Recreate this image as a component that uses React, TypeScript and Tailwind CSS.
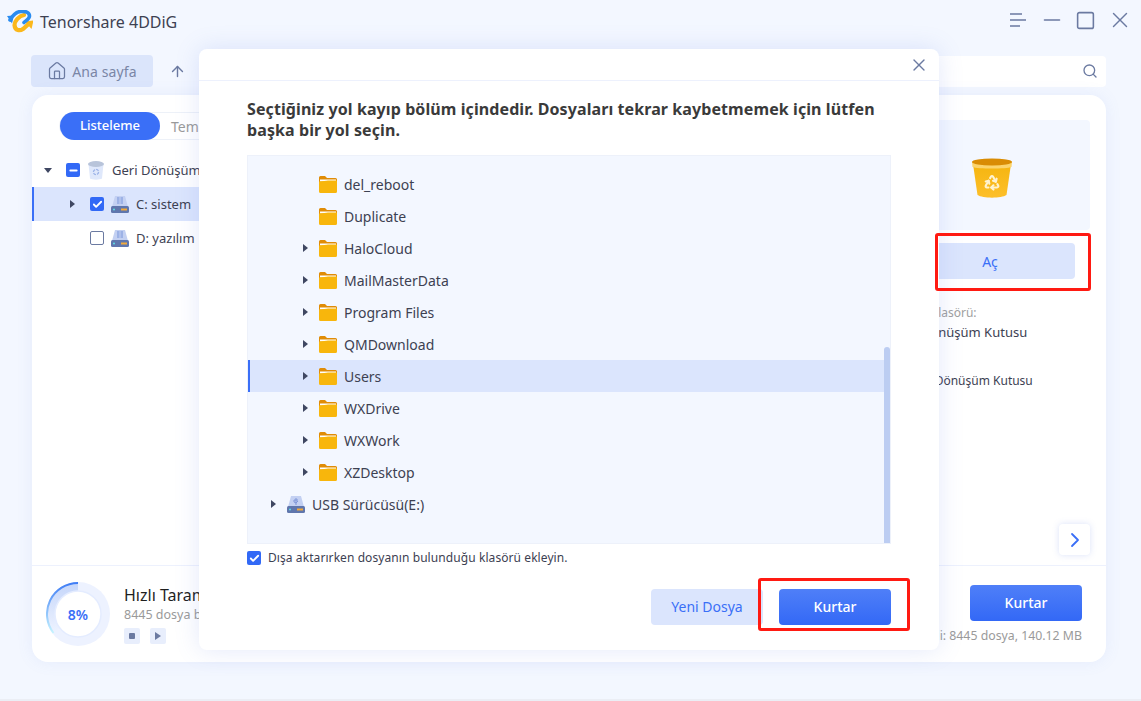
import { ArrowUp, Check, ChevronRight, House, Minus, Recycle, Search, Square, X } from "lucide-react"

const font = { fontFamily: '"Noto Sans", "Open Sans", sans-serif' }

const Logo = () => (
  <svg width="26" height="24" viewBox="3 4 26 24" fill="none">
    <path d="M20 9C15 10 10.500 15 10.500 19C11 25 16 25 19 23L24 18.500" stroke="#fbb81c" strokeWidth="4.200" strokeLinecap="round" />
    <path d="M21 15.500L29.500 14.500L27.500 23z" fill="#fbb81c" />
    <path d="M6 14C9 9 12 5.500 17 5.500C21 5 25.500 6 25.500 10C25.500 13 22 14.500 20 16.500" stroke="#2a8cf0" strokeWidth="3.600" strokeLinecap="round" />
    <path d="M3 10L10 9.500L8 17.500z" fill="#2a8cf0" />
  </svg>
)

const Folder = () => (
  <svg width="18" height="18" viewBox="0 0 18 18" className="shrink-0">
    <path d="M0 2.500A1.500 1.500 0 0 1 1.500 1H6l2 2h8.500A1.500 1.500 0 0 1 18 4.500V9H0z" fill="#e08c06" />
    <path d="M1 4.500h16v2H1z" fill="#fff" />
    <path d="M0 6.500c4 0 7-1 9-1h9v11A1.500 1.500 0 0 1 16.500 18h-15A1.500 1.500 0 0 1 0 16.500z" fill="#f8b60c" />
  </svg>
)

const Drive = ({ usb }: { usb?: boolean }) => (
  <svg width="18" height="18" viewBox="0 0 18 18" className="shrink-0">
    <path d="M4 1h10l3 11H1z" fill="#c3d0f2" />
    {usb ? <path d="M9 3v7M7 5h4M7 5v2l2 1 2-2" stroke="#7f96d8" fill="none" /> : <path d="M6 2h2.500v7H6zM9.500 2H12v7H9.500z" fill="#9db2e6" />}
    <rect x="0" y="11" width="18" height="7" rx="1.500" fill="#5f76ad" />
    <circle cx="3" cy="14.500" r="1" fill="#5fe0e6" />
    <rect x="10" y="13.500" width="6" height="2" fill="#f2a93b" />
  </svg>
)

const TrashSmall = () => (
  <svg width="18" height="20" viewBox="0 0 18 20" className="shrink-0">
    <path d="M1.500 4h15L15 18.500c-2 1.500-10 1.500-12 0z" fill="#dfe8fb" />
    <ellipse cx="9" cy="4" rx="8" ry="3" fill="#b8c4da" />
    <circle cx="9" cy="12" r="2.600" fill="none" stroke="#9db4e8" strokeWidth="1.300" strokeDasharray="3 1" />
  </svg>
)

const BinLarge = () => (
  <svg width="42" height="42" viewBox="0 0 42 42">
    <defs>
      <linearGradient id="binBody" x1="0" y1="0" x2="0" y2="1">
        <stop offset="0" stopColor="#f5b50f" />
        <stop offset="1" stopColor="#fdbf2a" />
      </linearGradient>
    </defs>
    <path d="M2 7h38l-4.500 31c-5 3.500-24 3.500-29 0z" fill="url(#binBody)" />
    <path d="M1 5c4-4 36-4 40 0l-.5 5c-5 2-34 2-39 0z" fill="#fbd46c" />
    <ellipse cx="21" cy="5" rx="20" ry="3.400" fill="#d98c04" />
    <Recycle x="12.500" y="17" width="17" height="17" color="#fff3cf" strokeWidth="3" />
  </svg>
)

const Ring = () => (
  <svg width="64" height="64" viewBox="0 0 64 64" className="shrink-0">
    <defs>
      <linearGradient id="ringArc" x1="0" y1="0" x2="0" y2="1">
        <stop offset="0" stopColor="#3f7df5" />
        <stop offset="1" stopColor="#c6f4ff" />
      </linearGradient>
      <linearGradient id="ringFill" x1="0" y1="0" x2="0" y2="1">
        <stop offset="0" stopColor="#c5d6fa" />
        <stop offset="1" stopColor="#eef3ff" />
      </linearGradient>
    </defs>
    <circle cx="32" cy="32" r="32" fill="#edf2ff" />
    <path d="M32 0.500A31.500 31.500 0 0 0 7 51L32 32z" fill="url(#ringFill)" />
    <path d="M32 1A31 31 0 0 0 7.500 51" fill="none" stroke="url(#ringArc)" strokeWidth="2" />
    <circle cx="32" cy="32" r="23" fill="#fff" stroke="#e4ecff" strokeWidth="1.500" />
  </svg>
)

const Arrow = ({ dir = "right", hidden }: { dir?: "right" | "down"; hidden?: boolean }) => (
  <svg width="8" height="8" viewBox="0 0 8 8" className={hidden ? "invisible shrink-0" : "shrink-0"}>
    <path d={dir === "right" ? "M2 0l5 4-5 4z" : "M0 2h8L4 7z"} fill="#3f4762" />
  </svg>
)

const Box = ({ state }: { state?: "check" | "minus" }) =>
  state ? (
    <span className="flex h-[14px] w-[14px] shrink-0 items-center justify-center rounded-[2px] bg-[#3269f6] text-white">
      {state === "check" ? <Check size={11} strokeWidth={4} /> : <Minus size={11} strokeWidth={4} />}
    </span>
  ) : (
    <span className="block h-[14px] w-[14px] shrink-0 rounded-[2px] border border-[#6b7aa1] bg-white" />
  )

const folders = [
  { name: "del_reboot", leaf: true },
  { name: "Duplicate", leaf: true },
  { name: "HaloCloud" },
  { name: "MailMasterData" },
  { name: "Program Files" },
  { name: "QMDownload" },
  { name: "Users", active: true },
  { name: "WXDrive" },
  { name: "WXWork" },
  { name: "XZDesktop" },
]

export default function App() {
  return (
    <div style={font} className="relative flex h-[701px] w-[1141px] flex-col overflow-hidden bg-[#f3f7ff] text-[#3d4152]">
      {/* title bar */}
      <div className="flex h-[55px] shrink-0 items-start">
        <div className="ml-[7px] mt-[10px]">
          <Logo />
        </div>
        <span className="ml-[7px] mt-[10px] text-[16px] leading-[24px] text-[#3d4152]">Tenorshare 4DDiG</span>
        <div className="ml-auto mr-[8px] mt-[7px] flex h-[26px] items-center text-[#6b7aa1]">
          <svg width="18" height="20" viewBox="0 0 18 20" stroke="currentColor" strokeWidth="1.600">
            <path d="M1 4h12M1 10h16M1 16h10" />
          </svg>
          <Minus size={26} strokeWidth={1.300} className="ml-[12px]" />
          <Square size={21} strokeWidth={1.800} className="ml-[10px]" />
          <X size={26} strokeWidth={1.300} className="ml-[11px]" />
        </div>
      </div>

      {/* nav row */}
      <div className="flex h-[32px] shrink-0 items-center pl-[31px] pr-[35px]">
        <div className="flex h-[32px] w-[122px] items-center justify-center gap-[5px] rounded-[4px] bg-[#dbe5fb] text-[14px] tracking-[0.1px] text-[#7a86a6]">
          <House size={20} strokeWidth={1.500} className="text-[#6b7aa1]" />
          Ana sayfa
        </div>
        <ArrowUp size={17} strokeWidth={2} className="ml-[16px] text-[#6b7aa1]" />
        <div className="ml-auto flex h-[31px] w-[300px] items-center justify-end rounded-[4px] bg-white pr-[8px] text-[#6b7aa1]">
          <Search size={16} strokeWidth={2} />
        </div>
      </div>

      {/* main card */}
      <div className="ml-[32px] mt-[8px] flex h-[567px] w-[1074px] flex-col rounded-[16px] bg-white shadow-[0_0_16px_rgba(110,140,230,0.10)]">
        <div className="flex h-[471px] shrink-0 border-b border-[#edf1fd]">
          <div className="flex-1">
            <div className="ml-[27px] mt-[17px] flex h-[28px] w-[230px] items-center rounded-full border border-[#edf1f8] text-[13px]">
              <span className="flex h-[28px] w-[100px] items-center justify-center rounded-full bg-[#3a6ff7] font-medium text-white">Listeleme</span>
              <span className="ml-[11px] text-[14px] text-[#9a9a9a]">Tem</span>
            </div>
            <div className="mt-[13px] text-[13px]">
              <div className="flex h-[34px] items-center gap-[7px] pl-[12px]">
                <Arrow dir="down" />
                <span className="ml-[7px]"><Box state="minus" /></span>
                <TrashSmall />
                <span className="pt-[1px]">Geri Dönüşüm Kutusu</span>
              </div>
              <div className="flex h-[34px] items-center gap-[7px] border-l-2 border-[#3a6ff7] bg-[#dbe5fd] pl-[34px]">
                <Arrow />
                <span className="ml-[7px]"><Box state="check" /></span>
                <Drive />
                <span className="pt-[1px]">C: sistem</span>
              </div>
              <div className="flex h-[34px] items-center gap-[7px] pl-[36px]">
                <Arrow hidden />
                <span className="ml-[7px]"><Box /></span>
                <Drive />
                <span className="pt-[1px]">D: yazılım</span>
              </div>
            </div>
          </div>

          <div className="mr-[16px] mt-[25px] flex w-[196px] shrink-0 flex-col pb-[10px]">
            <div className="flex h-[110px] shrink-0 items-start justify-center rounded-[4px] bg-[#f3f7ff] pt-[37px]">
              <BinLarge />
            </div>
            <button className="mx-[11px] mt-[13px] h-[36px] w-[170px] shrink-0 rounded-[4px] bg-[#dbe5fd] text-[14px] text-[#3a6ff7]">Aç</button>
            <p className="mt-[26px] text-[12px] leading-[16px] text-[#a0a0a0]">Dosya klasörü:</p>
            <p className="-ml-[2px] mt-[1px] text-[13px] leading-[20px] text-[#3d4152]">Geri Dönüşüm Kutusu</p>
            <p className="ml-[14px] mt-[31px] text-[12px] leading-[16px] text-[#3d4152]">Geri Dönüşüm Kutusu</p>
            <button className="mt-auto flex h-[31px] w-[31px] items-center justify-center self-end rounded-[4px] bg-white text-[#3a6ff7] shadow-[0_0_6px_rgba(110,140,230,0.25)]">
              <ChevronRight size={24} strokeWidth={1.800} />
            </button>
          </div>
        </div>

        <div className="flex flex-1 items-start pl-[14px] pr-[24px]">
          <div className="relative mt-[16px] flex h-[64px] w-[64px] shrink-0 items-center justify-center">
            <Ring />
            <span className="absolute text-[14px] font-semibold text-[#3a6ff7]">8%</span>
          </div>
          <div className="ml-[14px] mt-[19px]">
            <p className="text-[16px] leading-[21px] text-[#1f1f1f]">Hızlı Tarama</p>
            <p className="text-[12.500px] leading-[18px] text-[#9a9a9a]">8445 dosya bulundu</p>
            <div className="mt-[4px] flex gap-[10px]">
              <span className="flex h-[16px] w-[16px] items-center justify-center rounded-[2px] bg-[#e8eefc]">
                <span className="h-[6px] w-[6px] rounded-[1px] bg-[#6b7aa1]" />
              </span>
              <span className="flex h-[16px] w-[16px] items-center justify-center rounded-[2px] bg-[#e8eefc]">
                <svg width="6" height="8" viewBox="0 0 6 8"><path d="M0 0l6 4-6 4z" fill="#6b7aa1" /></svg>
              </span>
            </div>
          </div>
          <div className="ml-auto mt-[19px] flex flex-col items-end">
            <button className="h-[36px] w-[112px] rounded-[4px] bg-gradient-to-b from-[#4f7ff8] to-[#3368f6] pb-[2px] text-[14px] font-medium text-white">Kurtar</button>
            <p className="mt-[6px] text-[12.300px] leading-[18px] text-[#9a9a9a]">Seçili: 8445 dosya, 140.12 MB</p>
          </div>
        </div>
      </div>

      {/* dialog */}
      <div className="absolute left-[199px] top-[49px] flex h-[601px] w-[740px] flex-col rounded-[8px] bg-white shadow-[0_0_24px_rgba(100,130,230,0.18)]">
        <div className="flex h-[32px] shrink-0 items-center justify-end border-b border-[#edf1fd] pr-[10px] text-[#6b7aa1]">
          <X size={20} strokeWidth={1.600} />
        </div>
        <div className="flex flex-1 flex-col px-[48px]">
          <h2 className="mt-[18px] text-[16px] font-bold leading-[21px] tracking-[0.09px] text-[#3a3a3a]">
            Seçtiğiniz yol kayıp bölüm içindedir. Dosyaları tekrar kaybetmemek için lütfen başka bir yol seçin.
          </h2>
          <div className="mt-[14px] flex h-[389px] shrink-0 border border-[#edf1fa] bg-[#f3f7ff]">
            <div className="flex-1 pt-[12px] text-[14px]">
              {folders.map((f) => (
                <div
                  key={f.name}
                  className={
                    f.active
                      ? "flex h-[32px] items-center border-l-2 border-[#3a6ff7] bg-[#dbe5fd] pl-[51px]"
                      : "flex h-[32px] items-center pl-[53px]"
                  }
                >
                  <Arrow hidden={f.leaf} />
                  <span className="ml-[10px] flex items-center gap-[7px]">
                    <Folder />
                    {f.name}
                  </span>
                </div>
              ))}
              <div className="flex h-[32px] items-center pl-[21px]">
                <Arrow />
                <span className="ml-[10px] flex items-center gap-[7px]">
                  <Drive usb />
                  USB Sürücüsü(E:)
                </span>
              </div>
            </div>
            <div className="flex w-[6px] shrink-0 flex-col">
              <div className="mt-auto h-[196px] rounded-t-[3px] bg-[#bccdf2]" />
            </div>
          </div>
          <label className="mt-[6px] flex items-center gap-[7px] text-[12px] leading-[16px] tracking-[0.08px]">
            <Box state="check" />
            Dışa aktarırken dosyanın bulunduğu klasörü ekleyin.
          </label>
          <div className="mt-[23px] flex justify-end gap-[16px]">
            <button className="h-[36px] w-[112px] rounded-[4px] bg-[#dbe5fd] pb-[2px] text-[14px] text-[#3a6ff7]">Yeni Dosya</button>
            <button className="h-[36px] w-[112px] rounded-[4px] bg-gradient-to-b from-[#4f7ff8] to-[#3368f6] pb-[2px] text-[14px] font-medium text-white">Kurtar</button>
          </div>
        </div>
      </div>

      {/* red annotation boxes */}
      <div className="absolute left-[935px] top-[233px] h-[58px] w-[156px] rounded-[3px] border-[3px] border-[#ff1a12]" />
      <div className="absolute left-[758px] top-[578px] h-[53px] w-[152px] rounded-[3px] border-[3px] border-[#ff1a12]" />

      <div className="mt-auto h-[2px] bg-[#ebeef5]" />
    </div>
  )
}
